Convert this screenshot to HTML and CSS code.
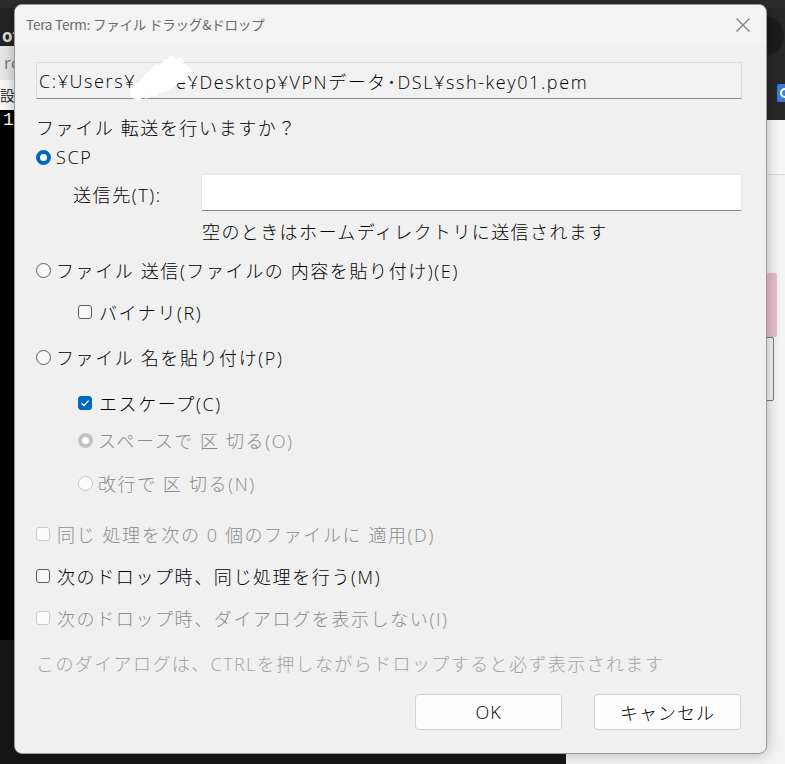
FILE: index.html
```html
<!DOCTYPE html>
<html>
<head>
	<meta charset="utf-8">
	<title>Tera Term: ファイル ドラッグ&amp;ドロップ</title>
	<link rel="stylesheet" href="styles.css">
</head>
<body>
<div class="desk">
	<div class="win-left">
		<div class="wl-tab">of</div>
		<div class="wl-addr">ro</div>
		<div class="wl-menu">設定</div>
		<div class="wl-term">1</div>
		<div class="wl-foot"></div>
	</div>
	<div class="win-right">
		<div class="wr-head">
			<span class="wr-avatar"></span>
			<span class="wr-chip"></span>
		</div>
		<div class="wr-body">
			<span class="wr-pink"></span>
			<span class="wr-box"></span>
		</div>
	</div>

	<div class="dialog">
		<div class="titlebar">
			<span class="title">Tera Term: ファイル ドラッグ&amp;ドロップ</span>
			<svg class="close" width="16" height="16" viewBox="0 0 16 16">
				<path d="M1.5 1.5 L14.5 14.5 M14.5 1.5 L1.5 14.5" stroke="#7a7a7a" stroke-width="1.2" fill="none"/>
			</svg>
		</div>
		<div class="content">
			<div class="pathbox">
				<span>C:¥Users¥</span><span class="mask"><svg width="70" height="52" viewBox="0 0 70 52">
					<path d="M6 46 L30 20 M10 48 L38 14 M18 46 L44 10 M26 44 L52 12 M34 40 L56 18 M40 38 L60 22" stroke="#fff" stroke-width="7" stroke-linecap="round" fill="none"/>
					<path d="M4 42 C14 34 20 26 28 18 M46 20 C52 26 56 32 62 34" stroke="#fff" stroke-width="5" stroke-linecap="round" fill="none" opacity="0.9"/>
				</svg></span><span>e¥Desktop¥VPNデータ･DSL¥ssh-key01.pem</span>
			</div>

			<div class="row q">ファイル 転送を行いますか？</div>

			<div class="row opt r-scp"><span class="radio on"></span>SCP</div>
			<div class="dest">
				<span class="dest-label">送信先(T):</span>
				<span class="dest-input"></span>
			</div>
			<div class="row hint">空のときはホームディレクトリに送信されます</div>

			<div class="row opt r-send"><span class="radio"></span>ファイル 送信(ファイルの 内容を貼り付け)(E)</div>
			<div class="row opt sub r-bin"><span class="check"></span>バイナリ(R)</div>

			<div class="row opt r-paste"><span class="radio"></span>ファイル 名を貼り付け(P)</div>
			<div class="row opt sub r-esc"><span class="check on"><svg width="10" height="8" viewBox="0 0 10 8"><path d="M1.5 4.2 L4 6.5 L8.6 1.6" stroke="#fff" stroke-width="1.3" fill="none"/></svg></span>エスケープ(C)</div>
			<div class="row opt sub off r-space"><span class="radio dis-on"></span>スペースで 区 切る(O)</div>
			<div class="row opt sub off r-nl"><span class="radio dis"></span>改行で 区 切る(N)</div>

			<div class="row opt off r-same"><span class="check dis"></span>同じ 処理を次の 0 個のファイルに 適用(D)</div>
			<div class="row opt r-next"><span class="check"></span>次のドロップ時、同じ処理を行う(M)</div>
			<div class="row opt off r-hide"><span class="check dis"></span>次のドロップ時、ダイアログを表示しない(I)</div>

			<div class="row note">このダイアログは、CTRLを押しながらドロップすると必ず表示されます</div>

			<div class="buttons">
				<button class="btn">OK</button>
				<button class="btn">キャンセル</button>
			</div>
		</div>
	</div>
</div>
</body>
</html>
```

FILE: styles.css
```css
body{
	margin: 0;
	background-color: #1a1a1a;
	font-family: "Open Sans", "Noto Sans CJK JP", sans-serif;
	overflow: hidden;
}
.desk{
	position: relative;
	width: 785px;
	height: 764px;
	border-top: 8px solid #2d2d2d;
	box-sizing: border-box;
}

/* windows behind the dialog */
.win-left{
	position: absolute;
	left: 0;
	top: 0;
	width: 566px;
	height: 756px;
	display: flex;
	flex-direction: column;
	overflow: hidden;
}
.wl-tab{
	height: 38px;
	background-color: #232323;
	color: #ddd;
	font-size: 17px;
	font-weight: bold;
	line-height: 56px;
	padding-left: 2px;
	box-sizing: border-box;
}
.wl-addr{
	height: 34px;
	background-color: #e6e6e6;
	color: #777;
	font-size: 17px;
	line-height: 34px;
	padding-left: 4px;
}
.wl-menu{
	height: 30px;
	background-color: #f7f7f7;
	color: #333;
	font-size: 15px;
	line-height: 30px;
}
.wl-term{
	height: 530px;
	background-color: #000;
	color: #fff;
	font-family: "Liberation Mono", monospace;
	font-size: 18px;
	line-height: 20px;
	padding-left: 3px;
}
.wl-foot{
	flex: 1;
	background-color: #161616;
}

.win-right{
	position: absolute;
	left: 566px;
	top: 0;
	width: 219px;
	height: 756px;
	display: flex;
	flex-direction: column;
}
.wr-head{
	position: relative;
	height: 112px;
	background-color: #282828;
}
.wr-avatar{
	position: absolute;
	left: 178px;
	top: 8px;
	width: 40px;
	height: 40px;
	border-radius: 50%;
	background-color: #1c1c1c;
}
.wr-chip{
	position: absolute;
	left: 211px;
	top: 76px;
	width: 16px;
	height: 18px;
	background-color: #3a7be0;
	border-radius: 2px;
}
.wr-chip::after{
	content: "";
	position: absolute;
	left: 3px;
	top: 4px;
	width: 6px;
	height: 6px;
	border: 2px solid #fff;
	border-radius: 50%;
}
.wr-body{
	position: relative;
	flex: 1;
	background-color: #f3f3f3;
	border-top: 1px solid #dcdcdc;
	margin-top: 54px;
}
.wr-body::before{
	content: "";
	position: absolute;
	left: 0;
	right: 0;
	top: -55px;
	height: 54px;
	background-color: #f6f6f6;
}
.wr-pink{
	position: absolute;
	left: 197px;
	top: 98px;
	width: 14px;
	height: 64px;
	background-color: #e6bccb;
	border-radius: 2px;
}
.wr-box{
	position: absolute;
	left: 197px;
	top: 162px;
	width: 9px;
	height: 62px;
	border: 1px solid #7a7a7a;
	border-radius: 2px;
}

/* the dialog */
.dialog{
	position: absolute;
	left: 14px;
	top: -4px;
	width: 753px;
	height: 750px;
	box-sizing: border-box;
	background-color: #f0f0f0;
	border: 1px solid #9a9a9a;
	border-radius: 8px;
	box-shadow: 0 0 14px rgba(0,0,0,0.28);
	overflow: hidden;
}
.titlebar{
	height: 38px;
	background-color: #f3f3f3;
	display: flex;
	align-items: center;
	justify-content: space-between;
	padding: 0 15px 0 11px;
}
.title{
	font-family: "Noto Sans CJK JP", sans-serif;
	font-size: 13.5px;
	color: #6a6a6a;
	letter-spacing: -0.2px;
}
.close{
	margin-top: 1px;
}

.content{
	padding: 19px 24px 0 21px;
	font-size: 18px;
	font-weight: 300;
	color: #000;
	letter-spacing: 1.6px;
}
.pathbox{
	height: 37px;
	box-sizing: border-box;
	border: 1px solid #dcdcdc;
	border-bottom: 1px solid #8a8a8a;
	background-color: #f1f1f1;
	display: flex;
	align-items: center;
	padding-left: 2px;
	white-space: nowrap;
}
.mask{
	position: relative;
	display: inline-block;
	width: 40px;
	height: 20px;
}
.mask svg{
	position: absolute;
	left: -8px;
	top: -22px;
}

.row{
	height: 28px;
	display: flex;
	align-items: center;
	white-space: nowrap;
}
.opt{
	gap: 5px;
}
.sub{
	padding-left: 42px;
}
.off{
	color: #8c8c8c;
}
.q{ margin-top: 14px; }
.r-scp{ margin-top: 2px; }
.hint{ margin-top: 6px; padding-left: 166px; letter-spacing: 1.4px; }
.r-send{ margin-top: 11px; }
.r-bin{ margin-top: 14px; }
.r-paste{ margin-top: 17px; }
.r-esc{ margin-top: 18px; }
.r-space{ margin-top: 9px; }
.r-nl{ margin-top: 15px; }
.r-same{ margin-top: 23px; }
.r-next{ margin-top: 14px; }
.r-hide{ margin-top: 14px; }
.note{
	margin-top: 17px;
	color: #a3a3a3;
	letter-spacing: 1.4px;
}

.dest{
	margin-top: 3px;
	height: 37px;
	display: flex;
	align-items: center;
}
.dest-label{
	width: 165px;
	padding-left: 37px;
	box-sizing: border-box;
	margin-top: 2px;
}
.dest-input{
	flex: 1;
	height: 37px;
	box-sizing: border-box;
	background-color: #fff;
	border: 1px solid #e6e6e6;
	border-bottom: 1px solid #858585;
	border-radius: 2px;
}

.radio{
	width: 15px;
	height: 15px;
	box-sizing: border-box;
	border-radius: 50%;
	border: 1px solid #5c5c5c;
	background-color: #f8f8f8;
	flex-shrink: 0;
}
.radio.on{
	border: 4.5px solid #0067c0;
	background-color: #fff;
}
.radio.dis-on{
	border: 4.5px solid #c2c2c2;
	background-color: #fff;
}
.radio.dis{
	border-color: #c6c6c6;
	background-color: #fbfbfb;
}
.check{
	width: 14px;
	height: 14px;
	box-sizing: border-box;
	border-radius: 3px;
	border: 1px solid #5c5c5c;
	background-color: #f8f8f8;
	margin-right: 2px;
	flex-shrink: 0;
	display: flex;
	align-items: center;
	justify-content: center;
}
.check.on{
	border-color: #0067c0;
	background-color: #0067c0;
}
.check.dis{
	border-color: #cacaca;
	background-color: #fbfbfb;
}

.buttons{
	margin-top: 17px;
	display: flex;
	justify-content: flex-end;
	gap: 32px;
	padding-right: 1px;
}
.btn{
	width: 147px;
	height: 36px;
	background-color: #fdfdfd;
	border: 1px solid #d2d2d2;
	border-radius: 4px;
	font-family: inherit;
	font-size: 18px;
	font-weight: 300;
	letter-spacing: 1px;
	color: #000;
	padding: 0;
}
```
